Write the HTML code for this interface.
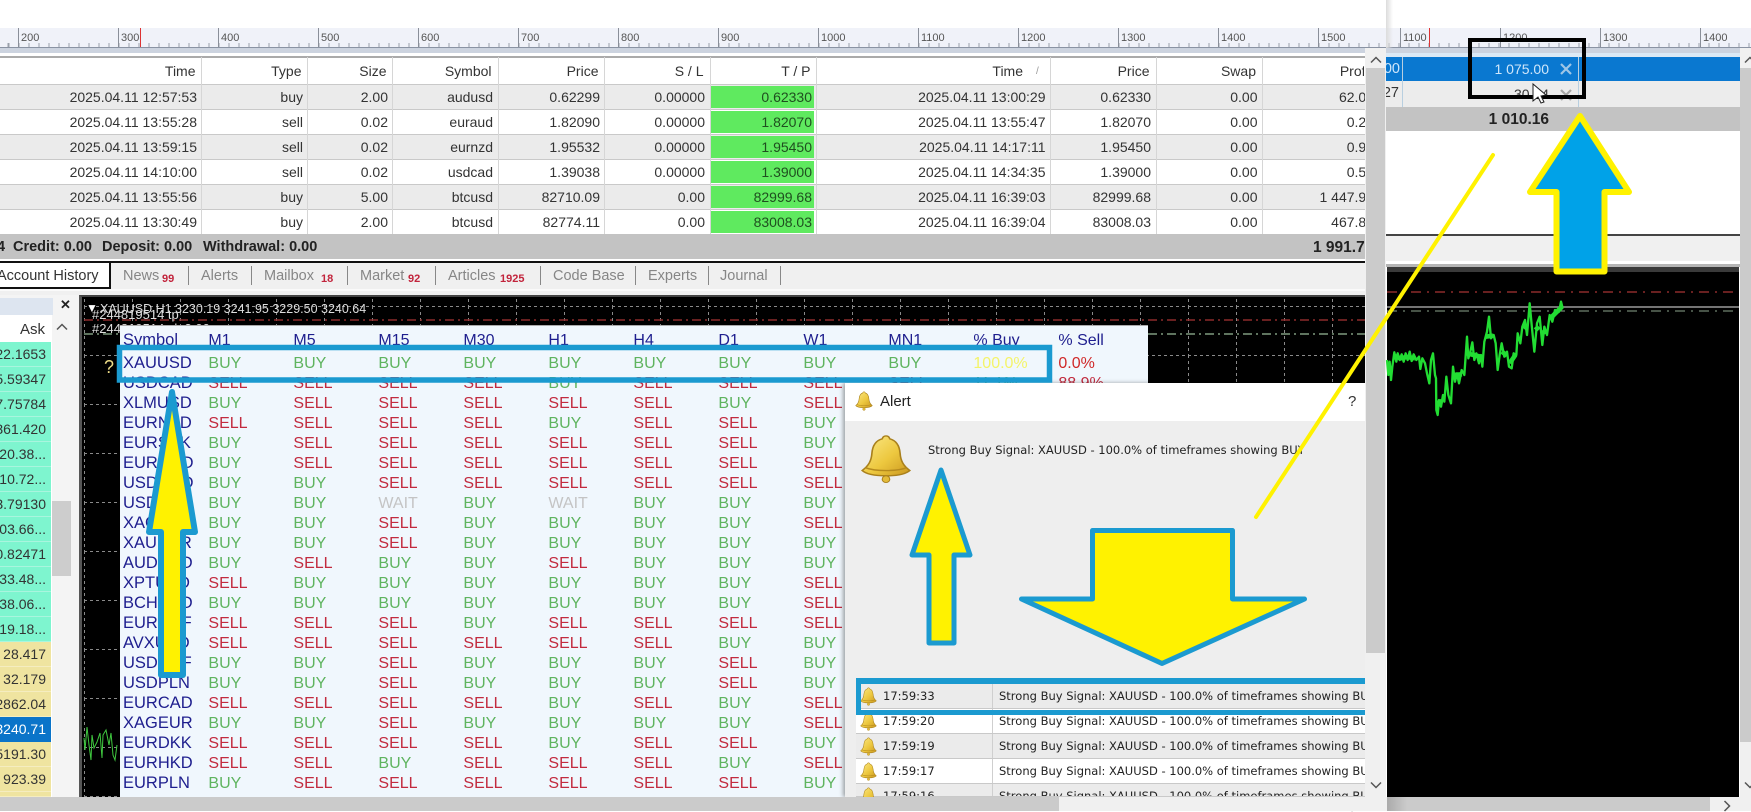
<!DOCTYPE html>
<html><head><meta charset="utf-8"><title>Alert</title>
<style>
html,body{margin:0;padding:0;width:1751px;height:811px;overflow:hidden;background:#fff;font-family:"Liberation Sans",sans-serif;color:#333}
div,svg{position:absolute}
svg{overflow:visible}
.rl{font-size:11px;color:#555;top:31px;line-height:14px}
.maj{width:1px;top:28px;height:19px;background:#8a8f99}
.tr{left:0;width:1365px;height:25px;display:flex;font-size:14px;line-height:24px;white-space:nowrap;overflow:hidden;box-sizing:border-box;border-bottom:1px solid #c9c9c9}
.tr span{display:block;flex:none;text-align:right;position:relative}
.tr span:nth-child(1){width:197px;margin-left:0}
.tr span:nth-child(2){width:106px}
.tr span:nth-child(3){width:85px}
.tr span:nth-child(4){width:105px}
.tr span:nth-child(5){width:107px}
.tr span:nth-child(6){width:105px}
.tr span:nth-child(7){width:107px;color:#1f4f1f}
.tr span:nth-child(8){width:233.5px}
.tr span:nth-child(9){width:105.5px}
.tr span:nth-child(10){width:106.5px}
.tr span:nth-child(11){width:116.5px}
.gy{background:#ebebeb}
.tr:before{content:"";position:absolute;left:711px;width:103px;top:1px;bottom:1px;background:#5fea5f}
.tr.hd:before{display:none}
.sp{width:1px;top:57px;height:177px;background:#d6d6d6}
.t{top:264px;font-size:14.5px;line-height:24px;color:#868686;white-space:nowrap}
.bd{top:271px;font-size:11px;line-height:16px;font-weight:bold;color:#c2243c;white-space:nowrap}
.ts{width:1px;top:266px;height:19px;background:#888}
.mw{left:0;width:51px;height:25px;box-sizing:border-box;border-bottom:1px solid #a9f5de;display:flex;justify-content:flex-end;padding-right:5px;font-size:14px;line-height:25px;white-space:nowrap;background:#7ef5cf}
.y{background:#efe4a0;border-bottom-color:#f5edc0}
.r{position:relative;height:20px;line-height:20px;white-space:nowrap;font-size:16px}
.r b,.r i,.r s,.r u,.r em{display:inline-block;text-decoration:none;font-style:normal;font-weight:normal}
.r b{width:85.4px;color:#1e1e8e;font-size:16.5px}
.r i,.r s,.r u,.r em{width:85px}
.r i{color:#5fb45f}
.r s{color:#c22a3e}
.r u{color:#c4c4c4}
.r em{color:#1e1e8e}
.al{left:856px;width:509px;height:25px;box-sizing:border-box;border-bottom:1px solid #c9c9c9;font:11.5px/24px "DejaVu Sans",sans-serif;color:#222;white-space:nowrap;overflow:hidden}
.al span{position:absolute;left:27px}
.al span+span{left:143px}
.al:after{content:"";position:absolute;left:136px;top:0;bottom:0;width:1px;background:#cfcfcf}
.bf{fill:url(#bg);stroke:#a9801c;stroke-width:1.5}
</style></head>
<body>
<!-- ruler -->
<div style="left:0;top:28px;width:1386px;height:19px;background:#f0f2f9;border-bottom:1px solid #8a93a3"></div>
<div style="left:1386px;top:28px;width:365px;height:19px;background:#f0f2f9;border-bottom:1px solid #8a93a3"></div>
<div style="left:0;top:43px;width:1751px;height:4px;background:repeating-linear-gradient(90deg,#9aa0aa 0 1px,transparent 1px 10px);background-position:8.5px 0"></div>
<div style="left:0;top:48px;width:1751px;height:5px;background:#ccd3df"></div>
<div class="maj" style="left:18px"></div><div class="rl" style="left:21px">200</div>
<div class="maj" style="left:118px"></div><div class="rl" style="left:121px">300</div>
<div class="maj" style="left:218px"></div><div class="rl" style="left:221px">400</div>
<div class="maj" style="left:318px"></div><div class="rl" style="left:321px">500</div>
<div class="maj" style="left:418px"></div><div class="rl" style="left:421px">600</div>
<div class="maj" style="left:518px"></div><div class="rl" style="left:521px">700</div>
<div class="maj" style="left:618px"></div><div class="rl" style="left:621px">800</div>
<div class="maj" style="left:718px"></div><div class="rl" style="left:721px">900</div>
<div class="maj" style="left:818px"></div><div class="rl" style="left:821px">1000</div>
<div class="maj" style="left:918px"></div><div class="rl" style="left:921px">1100</div>
<div class="maj" style="left:1018px"></div><div class="rl" style="left:1021px">1200</div>
<div class="maj" style="left:1118px"></div><div class="rl" style="left:1121px">1300</div>
<div class="maj" style="left:1218px"></div><div class="rl" style="left:1221px">1400</div>
<div class="maj" style="left:1318px"></div><div class="rl" style="left:1321px">1500</div>
<div class="maj" style="left:1400px"></div><div class="rl" style="left:1403px">1100</div>
<div class="maj" style="left:1500px"></div><div class="rl" style="left:1503px">1200</div>
<div class="maj" style="left:1600px"></div><div class="rl" style="left:1603px">1300</div>
<div class="maj" style="left:1700px"></div><div class="rl" style="left:1703px">1400</div>
<div style="left:140px;top:28px;width:1px;height:19px;background:#d33"></div>
<div style="left:1429px;top:28px;width:1px;height:19px;background:#d33"></div>

<!-- history table -->
<div style="left:0;top:56px;width:1365px;height:2px;background:#aaa"></div>
<div class="tr hd" style="top:58px;height:26px;line-height:26px;margin-left:-1.5px;border-bottom:0;background:#fff">
<span>Time</span><span>Type</span><span>Size</span><span>Symbol</span><span>Price</span><span>S / L</span><span style="color:#333">T / P</span><span style="padding-right:21px;box-sizing:border-box">Time</span><span>Price</span><span>Swap</span><span>Profit</span></div>
<div style="left:1036px;top:66px;font-size:10px;color:#999">/</div>
<div style="left:0;top:84px;width:1365px;height:1px;background:#c9c9c9"></div>
<div class="tr gy" style="top:85px"><span>2025.04.11 12:57:53</span><span>buy</span><span>2.00</span><span>audusd</span><span>0.62299</span><span>0.00000</span><span>0.62330</span><span>2025.04.11 13:00:29</span><span>0.62330</span><span>0.00</span><span>62.01</span></div>
<div class="tr" style="top:110px"><span>2025.04.11 13:55:28</span><span>sell</span><span>0.02</span><span>euraud</span><span>1.82090</span><span>0.00000</span><span>1.82070</span><span>2025.04.11 13:55:47</span><span>1.82070</span><span>0.00</span><span>0.25</span></div>
<div class="tr gy" style="top:135px"><span>2025.04.11 13:59:15</span><span>sell</span><span>0.02</span><span>eurnzd</span><span>1.95532</span><span>0.00000</span><span>1.95450</span><span>2025.04.11 14:17:11</span><span>1.95450</span><span>0.00</span><span>0.94</span></div>
<div class="tr" style="top:160px"><span>2025.04.11 14:10:00</span><span>sell</span><span>0.02</span><span>usdcad</span><span>1.39038</span><span>0.00000</span><span>1.39000</span><span>2025.04.11 14:34:35</span><span>1.39000</span><span>0.00</span><span>0.54</span></div>
<div class="tr gy" style="top:185px"><span>2025.04.11 13:55:56</span><span>buy</span><span>5.00</span><span>btcusd</span><span>82710.09</span><span>0.00</span><span>82999.68</span><span>2025.04.11 16:39:03</span><span>82999.68</span><span>0.00</span><span>1 447.95</span></div>
<div class="tr" style="top:210px;height:24px;border-bottom:0"><span>2025.04.11 13:30:49</span><span>buy</span><span>2.00</span><span>btcusd</span><span>82774.11</span><span>0.00</span><span>83008.03</span><span>2025.04.11 16:39:04</span><span>83008.03</span><span>0.00</span><span>467.83</span></div>
<div class="sp" style="left:201px"></div><div class="sp" style="left:307px"></div><div class="sp" style="left:392px"></div><div class="sp" style="left:498px"></div><div class="sp" style="left:604px"></div><div class="sp" style="left:710px"></div><div class="sp" style="left:816px"></div><div class="sp" style="left:1050px"></div><div class="sp" style="left:1156px"></div><div class="sp" style="left:1262px"></div>
<!-- total -->
<div style="left:0;top:234px;width:1365px;height:25px;background:#c3c3c3;overflow:hidden;font-weight:bold;font-size:14.5px;line-height:27px;color:#222;white-space:nowrap">
<div style="left:-3px">4</div><div style="left:13px">Credit: 0.00</div><div style="left:102px">Deposit: 0.00</div><div style="left:203px">Withdrawal: 0.00</div><div style="left:1313px;font-size:15.5px">1 991.75</div></div>
<!-- tabs -->
<div style="left:0;top:261px;width:1365px;height:2px;background:#111"></div>
<div style="left:0;top:263px;width:1365px;height:32px;background:#f0f0f0"></div>
<div style="left:0;top:263px;width:109px;height:24px;background:#fff;border-right:2px solid #111;border-bottom:2px solid #111"></div>
<div style="left:0;top:289px;width:1365px;height:2px;background:#fafafa"></div>
<div class="t" style="left:-3px;color:#333">Account History</div>
<div class="t" style="left:123px">News</div><div class="bd" style="left:162px">99</div><div class="ts" style="left:188px"></div>
<div class="t" style="left:201px">Alerts</div><div class="ts" style="left:251px"></div>
<div class="t" style="left:264px">Mailbox</div><div class="bd" style="left:321px">18</div><div class="ts" style="left:347px"></div>
<div class="t" style="left:360px">Market</div><div class="bd" style="left:408px">92</div><div class="ts" style="left:435px"></div>
<div class="t" style="left:448px">Articles</div><div class="bd" style="left:500px">1925</div><div class="ts" style="left:540px"></div>
<div class="t" style="left:553px">Code Base</div><div class="ts" style="left:635px"></div>
<div class="t" style="left:648px">Experts</div><div class="ts" style="left:708px"></div>
<div class="t" style="left:720px">Journal</div><div class="ts" style="left:780px"></div>

<!-- market watch -->
<div style="left:0;top:295px;width:79px;height:502px;background:#f4f4f4"></div>
<div style="left:0;top:315px;width:52px;height:482px;background:#fff"></div>
<div style="left:0;top:298px;width:53px;height:17px;background:#dde5f0"></div>
<div style="left:60px;top:296px;font:bold 13px/18px 'Liberation Sans',sans-serif;color:#222">✕</div>
<div style="left:20px;top:320px;width:25px;text-align:right;font-size:15px;line-height:20px">Ask</div>
<svg style="left:56px;top:323px" width="12" height="8"><path d="M1 6.500L6 1.500L11 6.500" fill="none" stroke="#555" stroke-width="1.500"/></svg>
<div style="left:52px;top:501px;width:19px;height:75px;background:#cdcdcd"></div>
<div class="mw" style="top:342px">22.1653</div><div class="mw" style="top:367px">15.59347</div><div class="mw" style="top:392px">17.75784</div><div class="mw" style="top:417px">1361.420</div><div class="mw" style="top:442px">20.38...</div><div class="mw" style="top:467px">10.72...</div><div class="mw" style="top:492px">13.79130</div><div class="mw" style="top:517px">03.66...</div><div class="mw" style="top:542px">90.82471</div><div class="mw" style="top:567px">33.48...</div><div class="mw" style="top:592px">38.06...</div><div class="mw" style="top:617px">19.18...</div>
<div class="mw y" style="top:642px">28.417</div><div class="mw y" style="top:667px">32.179</div><div class="mw y" style="top:692px">12862.04</div>
<div class="mw" style="top:717px;background:#0a74c9;color:#fff;border:0">13240.71</div>
<div class="mw y" style="top:742px">15191.30</div><div class="mw y" style="top:767px">923.39</div>
<div class="mw y" style="top:792px;height:5px"></div>

<!-- chart -->
<div style="left:79px;top:295px;width:1286px;height:502px;background:#000;border-left:3px solid #555;border-top:2px solid #444;box-sizing:border-box"></div>
<svg style="left:82px;top:297px" width="1283" height="500" viewBox="82 297 1283 500">
<defs><pattern id="gr" x="84" y="306" width="48" height="49" patternUnits="userSpaceOnUse"><path d="M0 .5H48M.5 0V49" stroke="#8a8a8a" stroke-dasharray="3 3" fill="none"/></pattern></defs>
<rect x="82" y="297" width="1283" height="500" fill="url(#gr)"/>
<path d="M84 320H1365" stroke="#8c2a2a" stroke-width="1.500" stroke-dasharray="9 4 2 4"/>
<path d="M84 334H1365" stroke="#7f9a7f" stroke-width="1.500" stroke-dasharray="9 4 2 4"/>
<path d="M84 738L85 750L87 727L89 745L91 760L92 735L94 748L97 742L100 733L102 758L103 735L106 730L109 745L111 733L113 755L115 760L117 745" fill="none" stroke="#3fc83f"/>
<text x="86" y="312" font-size="12" fill="#fff" font-family="Liberation Sans">▼</text>
<text x="100" y="313" font-size="12.500" fill="#ddd" font-family="Liberation Sans">XAUUSD,H1  3230.19 3241.95 3229.50 3240.64</text>
<text x="92" y="319" font-size="13" fill="#ddd" font-family="Liberation Sans">#244819514 tp</text>
<text x="92" y="333" font-size="13" fill="#ddd" font-family="Liberation Sans">#244819514 sl: 3.00</text>
<text x="104" y="373" font-size="18" fill="#eedd88" font-family="Liberation Sans">?</text>
</svg>

<!-- dashboard -->
<div style="left:120px;top:325px;width:1028px;height:472px;background:#f0f7fd;border-top:1px solid #aaa;box-sizing:border-box;overflow:hidden"></div>
<div style="left:123px;top:330px;width:1025px;height:467px;overflow:hidden">
<div class="r" style="position:absolute;left:0;top:0"><b>Symbol</b><em>M1</em><em>M5</em><em>M15</em><em>M30</em><em>H1</em><em>H4</em><em>D1</em><em>W1</em><em>MN1</em><em>% Buy</em><em>% Sell</em></div>
<div style="left:0;top:23px">
<div class="r"><b>XAUUSD</b><i>BUY</i><i>BUY</i><i>BUY</i><i>BUY</i><i>BUY</i><i>BUY</i><i>BUY</i><i>BUY</i><i>BUY</i><i style="color:#f4f46a">100.0%</i><i style="color:#d02828">0.0%</i></div>
<div class="r"><b>USDCAD</b><s>SELL</s><s>SELL</s><s>SELL</s><s>SELL</s><i>BUY</i><s>SELL</s><s>SELL</s><s>SELL</s><s>SELL</s><i>11.1%</i><s>88.9%</s></div>
<div class="r"><b>XLMUSD</b><i>BUY</i><s>SELL</s><s>SELL</s><s>SELL</s><s>SELL</s><s>SELL</s><i>BUY</i><s>SELL</s></div>
<div class="r"><b>EURNZD</b><s>SELL</s><s>SELL</s><s>SELL</s><s>SELL</s><i>BUY</i><s>SELL</s><s>SELL</s><i>BUY</i></div>
<div class="r"><b>EURSEK</b><i>BUY</i><s>SELL</s><s>SELL</s><s>SELL</s><s>SELL</s><s>SELL</s><s>SELL</s><i>BUY</i></div>
<div class="r"><b>EURSGD</b><i>BUY</i><s>SELL</s><s>SELL</s><s>SELL</s><s>SELL</s><s>SELL</s><s>SELL</s><s>SELL</s></div>
<div class="r"><b>USDSGD</b><i>BUY</i><i>BUY</i><s>SELL</s><s>SELL</s><s>SELL</s><s>SELL</s><s>SELL</s><s>SELL</s></div>
<div class="r"><b>USDZAR</b><i>BUY</i><i>BUY</i><u>WAIT</u><i>BUY</i><u>WAIT</u><i>BUY</i><i>BUY</i><i>BUY</i></div>
<div class="r"><b>XAGUSD</b><i>BUY</i><i>BUY</i><s>SELL</s><i>BUY</i><i>BUY</i><i>BUY</i><i>BUY</i><s>SELL</s></div>
<div class="r"><b>XAUEUR</b><i>BUY</i><i>BUY</i><s>SELL</s><i>BUY</i><i>BUY</i><i>BUY</i><i>BUY</i><i>BUY</i></div>
<div class="r"><b>AUDUSD</b><i>BUY</i><s>SELL</s><i>BUY</i><i>BUY</i><s>SELL</s><i>BUY</i><i>BUY</i><i>BUY</i></div>
<div class="r"><b>XPTUSD</b><s>SELL</s><i>BUY</i><i>BUY</i><i>BUY</i><i>BUY</i><i>BUY</i><i>BUY</i><s>SELL</s></div>
<div class="r"><b>BCHUSD</b><i>BUY</i><i>BUY</i><i>BUY</i><i>BUY</i><i>BUY</i><i>BUY</i><i>BUY</i><s>SELL</s></div>
<div class="r"><b>EURCHF</b><s>SELL</s><s>SELL</s><s>SELL</s><i>BUY</i><s>SELL</s><s>SELL</s><s>SELL</s><s>SELL</s></div>
<div class="r"><b>AVXUSD</b><s>SELL</s><s>SELL</s><s>SELL</s><s>SELL</s><s>SELL</s><s>SELL</s><i>BUY</i><i>BUY</i></div>
<div class="r"><b>USDCHF</b><i>BUY</i><i>BUY</i><s>SELL</s><i>BUY</i><i>BUY</i><i>BUY</i><s>SELL</s><i>BUY</i></div>
<div class="r"><b>USDPLN</b><i>BUY</i><i>BUY</i><s>SELL</s><i>BUY</i><i>BUY</i><i>BUY</i><s>SELL</s><i>BUY</i></div>
<div class="r"><b>EURCAD</b><s>SELL</s><s>SELL</s><s>SELL</s><s>SELL</s><i>BUY</i><s>SELL</s><i>BUY</i><s>SELL</s></div>
<div class="r"><b>XAGEUR</b><i>BUY</i><i>BUY</i><s>SELL</s><i>BUY</i><i>BUY</i><i>BUY</i><i>BUY</i><s>SELL</s></div>
<div class="r"><b>EURDKK</b><s>SELL</s><s>SELL</s><s>SELL</s><s>SELL</s><i>BUY</i><s>SELL</s><s>SELL</s><i>BUY</i></div>
<div class="r"><b>EURHKD</b><s>SELL</s><s>SELL</s><i>BUY</i><s>SELL</s><s>SELL</s><s>SELL</s><i>BUY</i><s>SELL</s></div>
<div class="r"><b>EURPLN</b><i>BUY</i><s>SELL</s><s>SELL</s><s>SELL</s><s>SELL</s><s>SELL</s><s>SELL</s><i>BUY</i></div>
</div></div>

<!-- alert dialog -->
<div style="left:845px;top:383px;width:520px;height:414px;background:#eee;box-shadow:-2px 0 4px rgba(0,0,0,.35)"></div>
<div style="left:845px;top:383px;width:520px;height:38px;background:#fff"></div>
<div style="left:880px;top:392px;font-size:15px;line-height:20px;color:#222">Alert</div>
<div style="left:1348px;top:392px;font-size:15px;line-height:20px;color:#333">?</div>
<div style="left:928px;top:442px;font:11.5px/16px 'DejaVu Sans',sans-serif;color:#222;white-space:nowrap;width:390px;overflow:hidden">Strong Buy Signal: XAUUSD - 100.0% of timeframes showing BUY</div>
<div class="al gy" style="top:684px"><span>17:59:33</span><span>Strong Buy Signal: XAUUSD - 100.0% of timeframes showing BUY</span></div>
<div class="al" style="top:709px;background:#fff"><span>17:59:20</span><span>Strong Buy Signal: XAUUSD - 100.0% of timeframes showing BUY</span></div>
<div class="al gy" style="top:734px"><span>17:59:19</span><span>Strong Buy Signal: XAUUSD - 100.0% of timeframes showing BUY</span></div>
<div class="al" style="top:759px;background:#fff"><span>17:59:17</span><span>Strong Buy Signal: XAUUSD - 100.0% of timeframes showing BUY</span></div>
<div class="al gy" style="top:784px;height:13px"><span>17:59:16</span><span>Strong Buy Signal: XAUUSD - 100.0% of timeframes showing BUY</span></div>

<!-- scrollbars -->
<div style="left:1365px;top:48px;width:21px;height:749px;background:#f0f0f0"></div>
<div style="left:1366px;top:68px;width:19px;height:585px;background:#cbcbcb"></div>
<svg style="left:1370px;top:56px" width="12" height="8"><path d="M1 6.500L6 1.500L11 6.500" fill="none" stroke="#555" stroke-width="1.500"/></svg>
<svg style="left:1370px;top:781px" width="12" height="8"><path d="M1 1.500L6 6.500L11 1.500" fill="none" stroke="#555" stroke-width="1.500"/></svg>
<div style="left:0;top:797px;width:1059px;height:14px;background:#cbcbcb"></div>
<div style="left:1059px;top:797px;width:328px;height:14px;background:#f0f0f0"></div>
<svg style="left:1350px;top:800px" width="8" height="12"><path d="M1.500 1L6.500 6L1.500 11" fill="none" stroke="#555" stroke-width="1.500"/></svg>

<!-- right panel -->
<div style="left:1386px;top:0;width:7px;height:48px;background:linear-gradient(90deg,#dcdcdc,rgba(255,255,255,0))"></div>
<div style="left:1386px;top:53px;width:354px;height:4px;background:#dbe9f5"></div>
<div style="left:1386px;top:57px;width:354px;height:24px;background:#0a78d0"></div>
<div style="left:1386px;top:81px;width:354px;height:26px;background:#ececec"></div>
<div style="left:1386px;top:107px;width:354px;height:24px;background:#c3c3c3"></div>
<div style="left:1402px;top:57px;width:1px;height:50px;background:#b8cfe0"></div>
<div style="left:1578px;top:57px;width:1px;height:50px;background:#b8cfe0"></div>
<div style="left:1370px;top:57px;width:30px;text-align:right;font-size:14.5px;line-height:24px;color:#cfe6fa;clip-path:inset(0 0 0 16px)">00</div>
<div style="left:1370px;top:81px;width:29px;text-align:right;font-size:14.5px;line-height:24px;color:#333;clip-path:inset(0 0 0 16px)">27</div>
<div style="left:1489px;top:57px;width:60px;text-align:right;font-size:14px;line-height:25px;color:#cfe6fa">1 075.00</div>
<div style="left:1489px;top:82px;width:60px;text-align:right;font-size:14px;line-height:25px;color:#333">30.94</div>
<div style="left:1479px;top:107px;width:70px;text-align:right;font-size:15.5px;font-weight:bold;line-height:25px;color:#222">1 010.16</div>
<svg style="left:1560px;top:63px" width="12" height="12"><path d="M1 1L11 11M11 1L1 11" stroke="#9fc6e6" stroke-width="2.200"/></svg>
<svg style="left:1560px;top:89px" width="12" height="12"><path d="M1 1L11 11M11 1L1 11" stroke="#a6a6a6" stroke-width="2.200"/></svg>
<div style="left:1386px;top:234px;width:354px;height:2px;background:#444"></div>
<div style="left:1386px;top:236px;width:354px;height:25px;background:#f0f0f0"></div>
<div style="left:1386px;top:261px;width:354px;height:3px;background:#fff"></div>
<div style="left:1386px;top:264px;width:354px;height:3px;background:#b5b5b5"></div>
<div style="left:1387px;top:267px;width:352px;height:530px;background:#000"></div>
<div style="left:1387px;top:267px;width:352px;height:5px;background:#3a3a3a"></div>
<svg style="left:1387px;top:272px" width="352" height="60" viewBox="1387 272 352 60">
<path d="M1387 292H1739" stroke="#8c2a2a" stroke-width="1.500" stroke-dasharray="10 6 2 6"/>
<path d="M1387 307H1739" stroke="#9a9a9a" stroke-width="1.500"/>
<path d="M1387 311H1735" stroke="#8da38d" stroke-width="1" stroke-dasharray="10 6 2 6"/>
</svg>
<svg style="left:1387px;top:295px" width="200" height="130" viewBox="0 0 600 390">
<path d="M0 195L4 240L8 200L12 255L16 215L22 172L28 200L32 175L38 195L44 178L50 200L56 175L62 195L68 170L74 198L80 178L88 195L96 185L100 222L106 190L114 205L120 235L127 265L132 195L138 175L144 240L147 250L148 345L152 360L156 315L162 335L168 300L172 320L178 245L184 300L192 325L198 215L204 260L210 235L216 265L224 225L232 240L240 125L244 190L250 170L256 142L262 195L268 175L276 205L282 180L286 215L292 140L300 110L306 65L312 130L320 120L326 145L332 225L338 180L344 145L352 185L360 170L366 215L374 220L380 175L388 180L392 115L400 145L406 95L414 75L420 120L428 25L434 90L442 170L450 85L458 65L466 150L472 95L480 120L488 60L496 80L504 45L516 50L522 20L527 40" fill="none" stroke="#22dd33" stroke-width="7" stroke-linejoin="round"/>
<path d="M20 182L40 190L60 186L84 190M150 325L165 318M200 240L225 238M240 175L280 185M295 125L318 122M345 170L360 182M368 205L385 180M408 90L420 100M445 105L456 95M462 115L478 108M490 70L525 35" fill="none" stroke="#22dd33" stroke-width="14"/>
</svg>
<div style="left:1387px;top:797px;width:323px;height:14px;background:#cbcbcb"></div>
<div style="left:1387px;top:797px;width:20px;height:14px;background:linear-gradient(90deg,#aaa,#cbcbcb)"></div>
<div style="left:1710px;top:797px;width:41px;height:14px;background:#f0f0f0"></div>
<svg style="left:1723px;top:800px" width="8" height="12"><path d="M1.500 1L6.500 6L1.500 11" fill="none" stroke="#555" stroke-width="1.500"/></svg>
<div style="left:1740px;top:48px;width:11px;height:763px;background:#f0f0f0"></div>
<div style="left:1740px;top:68px;width:11px;height:674px;background:#cbcbcb"></div>
<svg style="left:1744px;top:56px" width="12" height="8"><path d="M1 6.500L6 1.500L11 6.500" fill="none" stroke="#555" stroke-width="1.500"/></svg>
<svg style="left:1744px;top:781px" width="12" height="8"><path d="M1 1.500L6 6.500L11 1.500" fill="none" stroke="#555" stroke-width="1.500"/></svg>

<!-- overlay annotations -->
<svg style="left:0;top:0" width="1751" height="811" viewBox="0 0 1751 811">
<defs>
<linearGradient id="bg" x1="0" y1="0" x2="1" y2="1"><stop offset="0" stop-color="#fbea8a"/><stop offset=".55" stop-color="#edc83f"/><stop offset="1" stop-color="#c9961e"/></linearGradient>
<symbol id="bell" viewBox="0 0 48 52" preserveAspectRatio="none"><path class="bf" d="M24 2C26 2 27 3 27.500 5C34 7 36.500 13 37 20C37.500 28 40 33 46 38C42 42 33 43.500 24 43.500C15 43.500 6 42 2 38C8 33 10.500 28 11 20C11.500 13 14 7 20.500 5C21 3 22 2 24 2Z"/><path d="M5 35C14 39 34 39 43 35" fill="none" stroke="#b58a1e" stroke-width="1.500"/><circle cx="24" cy="47" r="3.500" fill="#e3bb3a" stroke="#a9801c"/></symbol>
</defs>
<use href="#bell" x="860" y="434" width="52" height="50"/>
<use href="#bell" x="855" y="391" width="18" height="20"/>
<use href="#bell" x="860" y="687" width="17" height="19"/>
<use href="#bell" x="860" y="712" width="17" height="19"/>
<use href="#bell" x="860" y="737" width="17" height="19"/>
<use href="#bell" x="860" y="762" width="17" height="19"/>
<use href="#bell" x="860" y="787" width="17" height="19"/>
<rect x="119.500" y="347.500" width="930" height="32.500" fill="none" stroke="#1b9ad0" stroke-width="5.500"/>
<path d="M856 678H1365V684H861V710H1365V715H856Z" fill="#1b9ad0"/>
<rect x="845" y="797" width="520" height="14" fill="#f0f0f0"/>
<rect x="845" y="797" width="214" height="14" fill="#cbcbcb"/>
<path d="M172 392L195 532H183V675H161V532H149Z" fill="#fff200" stroke="#1b9ad0" stroke-width="6" stroke-linejoin="round"/>
<path d="M941 470L970 555H954V643H929V555H912Z" fill="#fff200" stroke="#1b9ad0" stroke-width="5" stroke-linejoin="round"/>
<path d="M1092.500 530.500H1232.500V599H1304.500L1162 663.500L1021.500 599H1092.500Z" fill="#fff200" stroke="#1b9ad0" stroke-width="5" stroke-linejoin="round"/>
<path d="M1256 517L1493 155" stroke="#fff200" stroke-width="4" stroke-linecap="round"/>
<path d="M1580 116L1629 192H1604.500V271.500H1556.500V192H1530Z" fill="#00a2e8" stroke="#fff200" stroke-width="6" stroke-linejoin="round"/>
<rect x="1470" y="40" width="114" height="57" fill="none" stroke="#000" stroke-width="4"/>
<path d="M1533 84V101L1538 97L1541 103L1544 102L1541 96L1546 95Z" fill="#fff" stroke="#222"/>
</svg>
</body></html>
